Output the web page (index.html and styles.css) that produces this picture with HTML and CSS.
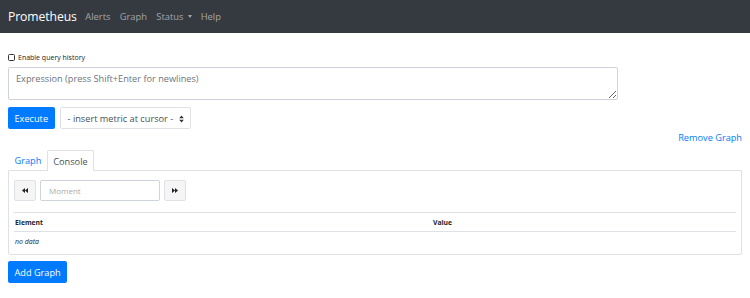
FILE: index.html
```html
<!DOCTYPE html>
<html>
<head>
<meta charset="utf-8">
<link rel="stylesheet" href="styles.css">
</head>
<body>
<nav class="navbar">
  <span class="brand">Prometheus</span>
  <a class="nav-link">Alerts</a>
  <a class="nav-link">Graph</a>
  <a class="nav-link">Status <span class="caret"></span></a>
  <a class="nav-link">Help</a>
</nav>
<main class="container">
  <label class="history"><input type="checkbox" class="check"> Enable query history</label>
  <textarea class="expr" placeholder="Expression (press Shift+Enter for newlines)"></textarea>
  <div class="exec-row">
    <button class="btn btn-primary">Execute</button>
    <div class="select">- insert metric at cursor -
      <svg class="updown" width="5" height="8" viewBox="0 0 5 8"><path d="M2.5 0.5 L4.8 3.3 H0.2 Z M2.5 7.5 L4.8 4.7 H0.2 Z" fill="#333"/></svg>
    </div>
  </div>
  <div class="remove-row"><a class="link">Remove Graph</a></div>
  <div class="tabs">
    <a class="tab">Graph</a>
    <a class="tab active">Console</a>
  </div>
  <div class="tab-content">
    <div class="moment-row">
      <button class="btn-light"><svg width="6" height="5" viewBox="0 0 6 5"><path d="M3 0 V5 L0 2.5 Z M6 0 V5 L3 2.5 Z" fill="#222"/></svg></button>
      <input class="moment" placeholder="Moment">
      <button class="btn-light"><svg width="6" height="5" viewBox="0 0 6 5"><path d="M0 0 V5 L3 2.5 Z M3 0 V5 L6 2.5 Z" fill="#222"/></svg></button>
    </div>
    <table class="table">
      <thead><tr><th>Element</th><th>Value</th></tr></thead>
      <tbody><tr><td colspan="2" class="nodata">no data</td></tr></tbody>
    </table>
  </div>
  <button class="btn btn-primary add">Add Graph</button>
</main>
</body>
</html>
```
FILE: styles.css
```css
* { box-sizing: border-box; }
body {
  margin: 0;
  font-family: "Open Sans", "Noto Sans", sans-serif;
  color: #212529;
  background: #fff;
  font-size: 9px;
}
.navbar {
  height: 33px;
  background: #343a40;
  display: flex;
  align-items: center;
  padding: 0 8px;
}
.brand {
  color: #fff;
  font-size: 12.2px;
  margin-right: 4px;
  letter-spacing: -0.1px;
}
.nav-link {
  color: rgba(255,255,255,.55);
  font-size: 9.4px;
  padding: 0 4.6px;
  display: flex;
  align-items: center;
}
.caret {
  display: inline-block;
  width: 0; height: 0;
  border-left: 2.5px solid transparent;
  border-right: 2.5px solid transparent;
  border-top: 3px solid rgba(255,255,255,.55);
  margin-left: 4px;
}
.container { padding: 0 8px; }
.history {
  display: flex;
  align-items: center;
  margin-top: 19px;
  height: 10px;
  font-size: 7px;
  color: #212529;
}
.check {
  appearance: none;
  -webkit-appearance: none;
  width: 7px; height: 7px;
  border: 1.2px solid #333;
  border-radius: 1.5px;
  margin: 0 3px 0 0;
}
.expr {
  display: block;
  width: 610px;
  height: 33px;
  margin-top: 5px;
  border: 1px solid #ced4da;
  border-radius: 2px;
  padding: 4px 7px;
  font-family: inherit;
  font-size: 9.2px;
  resize: vertical;
}
.expr::placeholder { color: #6c757d; }
.exec-row {
  display: flex;
  gap: 5px;
  margin-top: 7px;
}
.btn {
  height: 22px;
  border: none;
  border-radius: 2px;
  font-family: inherit;
  font-size: 9.2px;
  padding: 0 6.5px;
}
.btn-primary { background: #007bff; color: #fff; }
.select {
  height: 22px;
  width: 131px;
  border: 1px solid #dee2e6;
  border-radius: 2px;
  display: flex;
  align-items: center;
  padding: 0 7px;
  font-size: 9.2px;
  color: #495057;
  position: relative;
}
.updown { position: absolute; right: 6px; top: 7px; }
.remove-row {
  display: flex;
  justify-content: flex-end;
  margin-top: 1px;
  height: 15px;
  align-items: center;
}
.link { color: #007bff; font-size: 9.2px; }
.tabs {
  display: flex;
  margin-top: 5px;
  padding-left: 0;
}
.tab {
  height: 20px;
  padding: 0 5.5px;
  display: flex;
  align-items: center;
  font-size: 9.2px;
  color: #007bff;
  border: 1px solid transparent;
  border-bottom: none;
  border-radius: 2px 2px 0 0;
}
.tab:first-child { padding-right: 4.5px; }
.tab.active {
  color: #495057;
  border-color: #dee2e6;
  background: #fff;
  margin-bottom: -1px;
  position: relative;
  z-index: 1;
  height: 21px;
}
.tab-content {
  border: 1px solid #dee2e6;
  border-radius: 0 0 2px 2px;
  padding: 9px 5px 2px 5px;
  height: 85px;
}
.moment-row {
  display: flex;
  gap: 4px;
  height: 21px;
}
.btn-light {
  width: 22px;
  height: 21px;
  background: #f5f5f5;
  border: 1px solid #dee2e6;
  border-radius: 2px;
  display: flex;
  align-items: center;
  justify-content: center;
  padding: 0;
}
.moment {
  width: 120px;
  height: 21px;
  border: 1px solid #ced4da;
  border-radius: 2px;
  padding: 0 8px;
  font-family: inherit;
  font-size: 8px;
}
.moment::placeholder { color: #aaa; }
.table {
  width: 100%;
  border-collapse: collapse;
  margin-top: 11px;
  font-size: 6.8px;
}
.table th {
  text-align: left;
  font-weight: bold;
  color: #212529;
  border-top: 1px solid #dee2e6;
  border-bottom: 1.5px solid #dee2e6;
  height: 19px;
  padding: 0 1px;
}
.table th:first-child { width: 418px; }
.table td {
  height: 19px;
  padding: 0 1px;
  font-size: 7px;
  border-top: 1px solid #dee2e6;
}
.nodata { font-style: italic; }
.add { margin-top: 6px; }
```
